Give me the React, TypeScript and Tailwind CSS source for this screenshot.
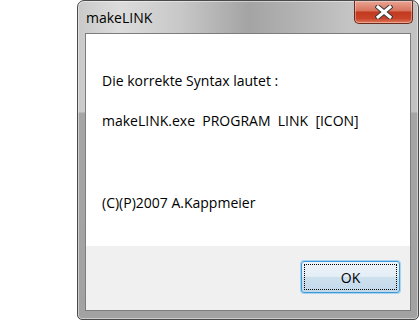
import React from 'react';

// Schließen-Knopf im Win7-Stil
const CloseButton: React.FC = () => (
  <div className="w-[59px] h-[23px] rounded-b-[5px] border border-t-0 border-[#6b2a1c] bg-[linear-gradient(180deg,#e8a493_0%,#d8735c_45%,#c13a1f_50%,#c9442a_80%,#e07b5c_100%)] flex items-center justify-center shadow-[inset_0_0_0_1px_rgba(255,255,255,0.35)]">
    <svg width="18" height="14" viewBox="0 0 18 14">
      <path
        d="M3 2 L15 12 M15 2 L3 12"
        stroke="#3a3a3a"
        strokeWidth="5"
        strokeLinecap="square"
      />
      <path
        d="M3 2 L15 12 M15 2 L3 12"
        stroke="#ffffff"
        strokeWidth="3"
        strokeLinecap="square"
      />
    </svg>
  </div>
);

const OkButton: React.FC = () => (
  <button className="w-[99px] h-[32px] rounded-[3px] border border-[#3c9ad8] bg-[linear-gradient(180deg,#eef4f9_0%,#e4eef6_48%,#cde0ee_50%,#c3d9ea_100%)] p-[2px] shadow-[0_0_0_1px_#a6d4f2]">
    <div className="w-full h-full border border-dotted border-black flex items-center justify-center text-[14px] text-black font-['Open_Sans',sans-serif]">
      OK
    </div>
  </button>
);

function App() {
  return (
    <div className="w-[420px] h-[320px] bg-white flex pl-[77px] font-['Open_Sans',sans-serif]">
      <div className="w-[342px] h-[320px] flex flex-col rounded-t-[7px] rounded-b-[5px] border border-[#4a4a4a] bg-[linear-gradient(180deg,transparent_0px,transparent_111px,#a5a5a5_112px,#a2a2a2_100%),linear-gradient(90deg,#c9c9c9_0%,#dcdcdc_12%,#c8c8c8_30%,#a4a4a4_50%,#b0b0b0_62%,#c4c4c4_80%,#c2c2c2_100%)] shadow-[inset_0_0_0_1px_rgba(255,255,255,0.45)]">
        <div className="h-[32px] flex items-start justify-between">
          <div className="pl-[8px] pt-[8px] text-[14px] leading-[18px] text-black">makeLINK</div>
          <div className="mr-[5px]">
            <CloseButton />
          </div>
        </div>
        <div className="flex-1 mx-[7px] mb-[8px] border border-[#7d7d7d] flex flex-col">
          <div className="flex-1 bg-white flex flex-col pl-[16px] pt-[38px] text-[14px] leading-[18px] text-black">
            <div>Die korrekte Syntax lautet :</div>
            <div className="mt-[22px] whitespace-pre">makeLINK.exe  PROGRAM  LINK  [ICON]</div>
            <div className="mt-[64px]">(C)(P)2007 A.Kappmeier</div>
          </div>
          <div className="h-[64px] bg-[#f0f0f0] flex justify-end items-start pt-[15px] pr-[10px]">
            <OkButton />
          </div>
        </div>
      </div>
    </div>
  );
}

export default App;
